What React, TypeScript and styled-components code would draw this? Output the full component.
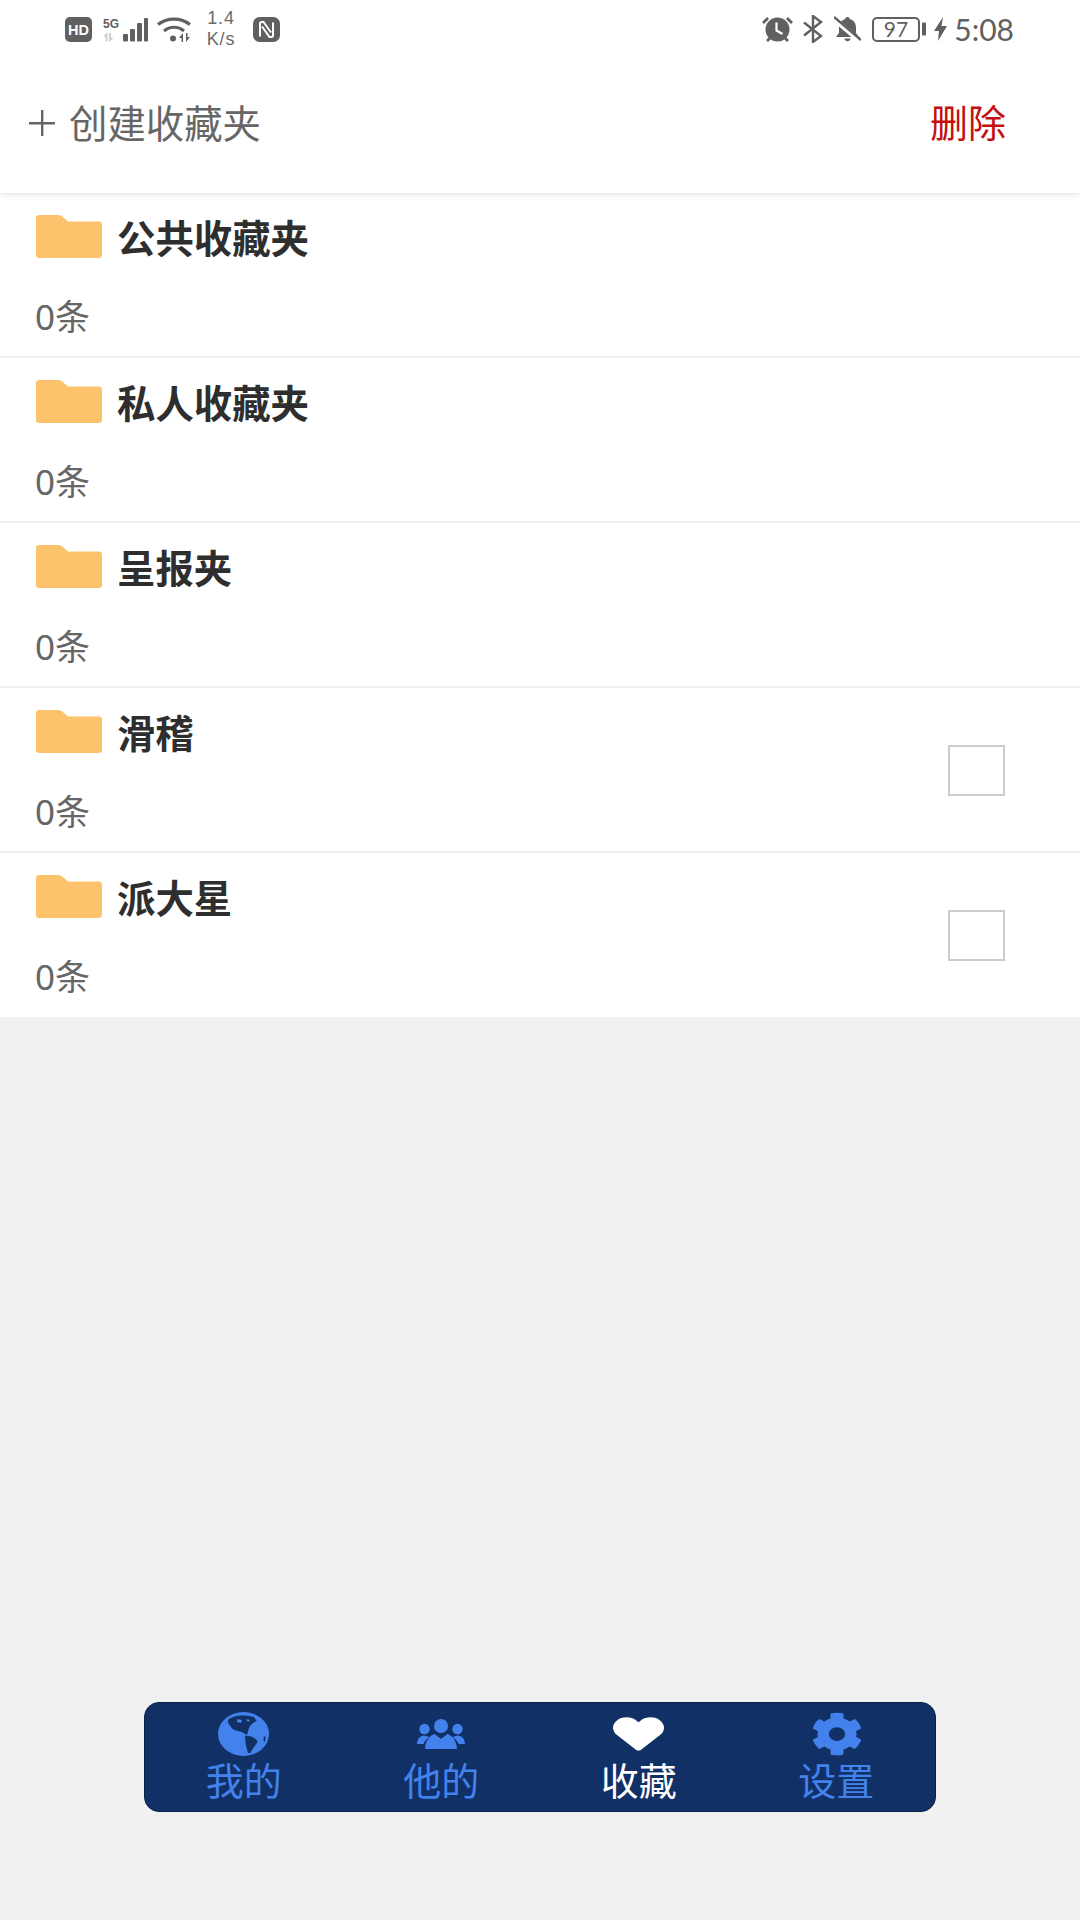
import React from "react";
import styled, { createGlobalStyle } from "styled-components";
import { FaHeart, FaCog } from "react-icons/fa";

const Global = createGlobalStyle`
  html, body { margin: 0; padding: 0; background: #f1f1f1; }
  * { box-sizing: border-box; }
`;

const Page = styled.div`
  width: 1080px;
  height: 1920px;
  display: flex;
  flex-direction: column;
  overflow: hidden;
  background: #f1f1f1;
  font-family: "Noto Sans CJK SC", "Noto Sans", sans-serif;
`;

const Top = styled.header`
  position: relative;
  z-index: 1;
  background: #fff;
  box-shadow: 0 1px 6px rgba(0, 0, 0, 0.14);
`;

const StatusBar = styled.div`
  height: 60px;
  padding: 0 66px 2px 65px;
  display: flex;
  align-items: center;
  justify-content: space-between;
  color: #606060;
`;

const StatusGroup = styled.div`
  display: flex;
  align-items: center;
`;

const StatusIcon = styled.svg<{ $left?: number }>`
  display: block;
  flex: none;
  margin-left: ${(p) => p.$left ?? 0}px;
  fill: #606060;
`;

const Speed = styled.div`
  width: 34px;
  margin-left: 13px;
  font: 18px/21px "Liberation Sans", sans-serif;
  letter-spacing: 0.8px;
  text-align: center;
  color: #6a6a6a;
`;

const Time = styled.div`
  margin-left: 7px;
  font: 30px/36px Lato, sans-serif;
  color: #606060;
`;

const ActionBar = styled.div`
  height: 133px;
  padding: 0 74px 8px 29px;
  display: flex;
  align-items: center;
  justify-content: space-between;
`;

const CreateButton = styled.div`
  display: flex;
  align-items: center;
  gap: 14px;
  color: #666;
`;

const CreateLabel = styled.span`
  font-size: 38.4px;
  line-height: 50px;
  padding-bottom: 4px;
`;

const PlusIcon = styled.svg`
  display: block;
  fill: #666;
`;

const DeleteButton = styled.div`
  font-size: 38px;
  line-height: 50px;
  padding-bottom: 4px;
  color: #c40f0f;
`;

const List = styled.main`
  background: #fff;
`;

const Row = styled.div`
  height: 165px;
  padding: 22px 75px 0 36px;
  display: flex;
  justify-content: space-between;
  border-bottom: 2px solid #f0f0f0;
  &:last-child {
    height: 164px;
    border-bottom: 0;
  }
`;

const RowText = styled.div`
  display: flex;
  flex-direction: column;
`;

const TitleLine = styled.div`
  height: 42px;
  display: flex;
  align-items: center;
  gap: 15px;
`;

const Title = styled.div`
  font-size: 38.4px;
  font-weight: 700;
  line-height: 42px;
  color: #2e2e2e;
`;

const Count = styled.div`
  margin: 38px 0 0 -1px;
  font-size: 35px;
  line-height: 44px;
  color: #666;
  font-family: "Noto Sans", "Noto Sans CJK SC", sans-serif;
`;

const Checkbox = styled.div`
  width: 57px;
  height: 51px;
  margin-top: 35px;
  border: 2px solid #cccccc;
`;

const NavBar = styled.nav`
  width: 792px;
  height: 110px;
  margin: auto auto 108px 144px;
  padding-top: 9px;
  display: grid;
  grid-template-columns: repeat(4, 1fr);
  background: #113066;
  border: 1px solid #0a2148;
  border-radius: 15px;
`;

const NavItem = styled.div<{ $active?: boolean }>`
  display: flex;
  flex-direction: column;
  align-items: center;
  font-size: 38px;
  line-height: 46px;
  color: ${(p) => (p.$active ? "#ffffff" : "#4382ec")};
`;

const NavIcon = styled.div`
  height: 44px;
  display: flex;
  align-items: center;
  justify-content: center;
`;

const HeartIcon = styled(FaHeart)`
  width: 51px;
  height: 38px;
`;

const GearIcon = styled(FaCog)`
  width: 52px;
  height: 44px;
  margin-left: 2px;
`;

const Folder = () => (
  <svg width="66" height="43" viewBox="0 0 66 43">
    <path d="M3 0h19c2 0 3 .6 4.500 1.800L32 6.500h31c1.700 0 3 1.300 3 3V40c0 1.700-1.300 3-3 3H3c-1.700 0-3-1.300-3-3V3c0-1.700 1.300-3 3-3z" fill="#fdc36c" />
  </svg>
);

const Globe = () => (
  <svg width="51" height="44" viewBox="0 0 51 44">
    <ellipse cx="25.500" cy="22" rx="25.500" ry="22" fill="#4382ec" />
    <path d="M10 8C15 3.500 24 2 36 5l2.500 4c-3 1.500-6 3.500-7.500 7l-2 7-4.500-2.500c-4-2-9.500-1.500-11.500-5.500-1.500-2-3.500-4-3-6.500z" fill="#113066" />
    <path d="M19 7l5 1-1 3-4-1zM28 7l4 1-2 2z" fill="#4382ec" />
    <path d="M27 24c5-1 11 2 12.500 5.500-1 3.500-5 6-7 11.500h-2.500c-1.500-5-3-11-3-17z" fill="#113066" />
    <path d="M46 24l1.500 1-.5 5-1.500-1z" fill="#113066" />
  </svg>
);

const Users = () => (
  <svg width="48" height="30" viewBox="0 0 48 30" fill="currentColor">
    <circle cx="24" cy="7" r="7" />
    <circle cx="7.500" cy="10" r="5.200" />
    <circle cx="40.500" cy="10" r="5.200" />
    <path d="M8 30c.5-9 5-13.500 9.500-15l6.500 5 6.500-5c4.500 1.500 9 6 9.500 15z" />
    <path d="M0 25c0-5 3-8 7.500-8.500l5 1.500C9.500 20 7.500 22 6.500 25zM48 25c0-5-3-8-7.500-8.500l-5 1.500c3 2 5 4 6 7z" />
  </svg>
);

const folders = [
  { name: "公共收藏夹", check: false },
  { name: "私人收藏夹", check: false },
  { name: "呈报夹", check: false },
  { name: "滑稽", check: true },
  { name: "派大星", check: true },
];

export default function App() {
  return (
    <Page>
      <Global />
      <Top>
        <StatusBar>
          <StatusGroup>
            <StatusIcon width="27" height="25" viewBox="0 0 27 25">
              <rect width="27" height="25" rx="5" />
              <text x="13.500" y="18" textAnchor="middle" fontSize="14.500" fontWeight="700" fontFamily="Liberation Sans" fill="#fff">HD</text>
            </StatusIcon>
            <StatusIcon $left={10} width="46" height="25" viewBox="0 0 46 25">
              <text x="1" y="11" fontSize="12" fontWeight="700" fontFamily="Liberation Sans">5G</text>
              <path d="M4.500 16l-3.500 4h2.500v4.500H5.500V16zM8 24.500l3.500-4H9V16H7v8.500z" fill="#d0d0d0" />
              <rect x="21" y="17" width="5" height="7.500" rx="1" />
              <rect x="28" y="12" width="5" height="12.500" rx="1" />
              <rect x="35" y="6" width="5" height="18.500" rx="1" />
              <rect x="42" y="1" width="4" height="23.500" rx="1" />
            </StatusIcon>
            <StatusIcon $left={9} width="34" height="25" viewBox="0 0 34 25">
              <path d="M1 7.500C10 .2 24 .2 33 7.500" fill="none" stroke="#606060" strokeWidth="3.200" />
              <path d="M7 14C13 9 21 9 27 14" fill="none" stroke="#606060" strokeWidth="3.200" />
              <circle cx="16" cy="21.500" r="3" />
              <path d="M26 16l-4 5h2.500v4H26zM29 25l4-5h-2.500v-4H29z" />
            </StatusIcon>
            <Speed>1.4<br />K/s</Speed>
            <StatusIcon $left={15} width="27" height="25" viewBox="0 0 27 25">
              <rect width="27" height="25" rx="6.500" />
              <path d="M7 19.500V6.500Q7 5 9 5h1.500L18 15.500M20 5.500V18.500Q20 20 18 20h-1.500L9 9.500" fill="none" stroke="#fff" strokeWidth="2" />
            </StatusIcon>
          </StatusGroup>
          <StatusGroup>
            <StatusIcon width="31" height="26" viewBox="0 0 31 26">
              <circle cx="15.500" cy="13.500" r="12" />
              <path d="M0 6l5-5 2 2-5 5zM31 6l-5-5-2 2 5 5zM4 24l3-3 2 2-3 3zM27 24l-3-3-2 2 3 3z" />
              <path d="M14.500 6.500v8l6 3.500" fill="none" stroke="#fff" strokeWidth="2.200" />
            </StatusIcon>
            <StatusIcon $left={10} width="20" height="28" viewBox="0 0 20 28">
              <path d="M1 7.500l17 13.500-8 6V1l8 6L1 20.500" fill="none" stroke="#606060" strokeWidth="2.400" />
            </StatusIcon>
            <StatusIcon $left={11} width="27" height="26" viewBox="0 0 27 26">
              <path d="M13.500 1c1.300 0 2.200.8 2.200 2 4 1 6.300 4.500 6.300 8.500V17l3 4H2l3-4v-5.500C5 7.500 7.500 4 11.300 3c0-1.200.9-2 2.200-2z" />
              <path d="M10.500 22.500h6c0 3.500-6 3.500-6 0z" />
              <path d="M0 3l27 23" stroke="#fff" strokeWidth="5" />
              <path d="M0 1l27 23" stroke="#606060" strokeWidth="2.400" />
            </StatusIcon>
            <StatusIcon $left={11} width="54" height="25" viewBox="0 0 54 25">
              <rect x="1" y="1" width="46" height="23" rx="4" fill="none" stroke="#606060" strokeWidth="2" />
              <text x="24" y="20" textAnchor="middle" fontSize="21" fontFamily="Lato">97</text>
              <rect x="50" y="5.500" width="4" height="13" rx="1" />
            </StatusIcon>
            <StatusIcon $left={8} width="13" height="24" viewBox="0 0 13 24">
              <path d="M9 0L0 14h5l-1 10L13 9H7.500z" />
            </StatusIcon>
            <Time>5:08</Time>
          </StatusGroup>
        </StatusBar>
        <ActionBar>
          <CreateButton>
            <PlusIcon width="26" height="26" viewBox="0 0 26 26">
              <path d="M12 0h2.400v12H26v2.400H14.400V26H12V14.400H0V12h12z" />
            </PlusIcon>
            <CreateLabel>创建收藏夹</CreateLabel>
          </CreateButton>
          <DeleteButton>删除</DeleteButton>
        </ActionBar>
      </Top>
      <List>
        {folders.map((f) => (
          <Row key={f.name}>
            <RowText>
              <TitleLine>
                <Folder />
                <Title>{f.name}</Title>
              </TitleLine>
              <Count>0条</Count>
            </RowText>
            {f.check && <Checkbox />}
          </Row>
        ))}
      </List>
      <NavBar>
        <NavItem>
          <NavIcon><Globe /></NavIcon>
          我的
        </NavItem>
        <NavItem>
          <NavIcon><Users /></NavIcon>
          他的
        </NavItem>
        <NavItem $active>
          <NavIcon><HeartIcon preserveAspectRatio="none" /></NavIcon>
          收藏
        </NavItem>
        <NavItem>
          <NavIcon><GearIcon preserveAspectRatio="none" /></NavIcon>
          设置
        </NavItem>
      </NavBar>
    </Page>
  );
}
